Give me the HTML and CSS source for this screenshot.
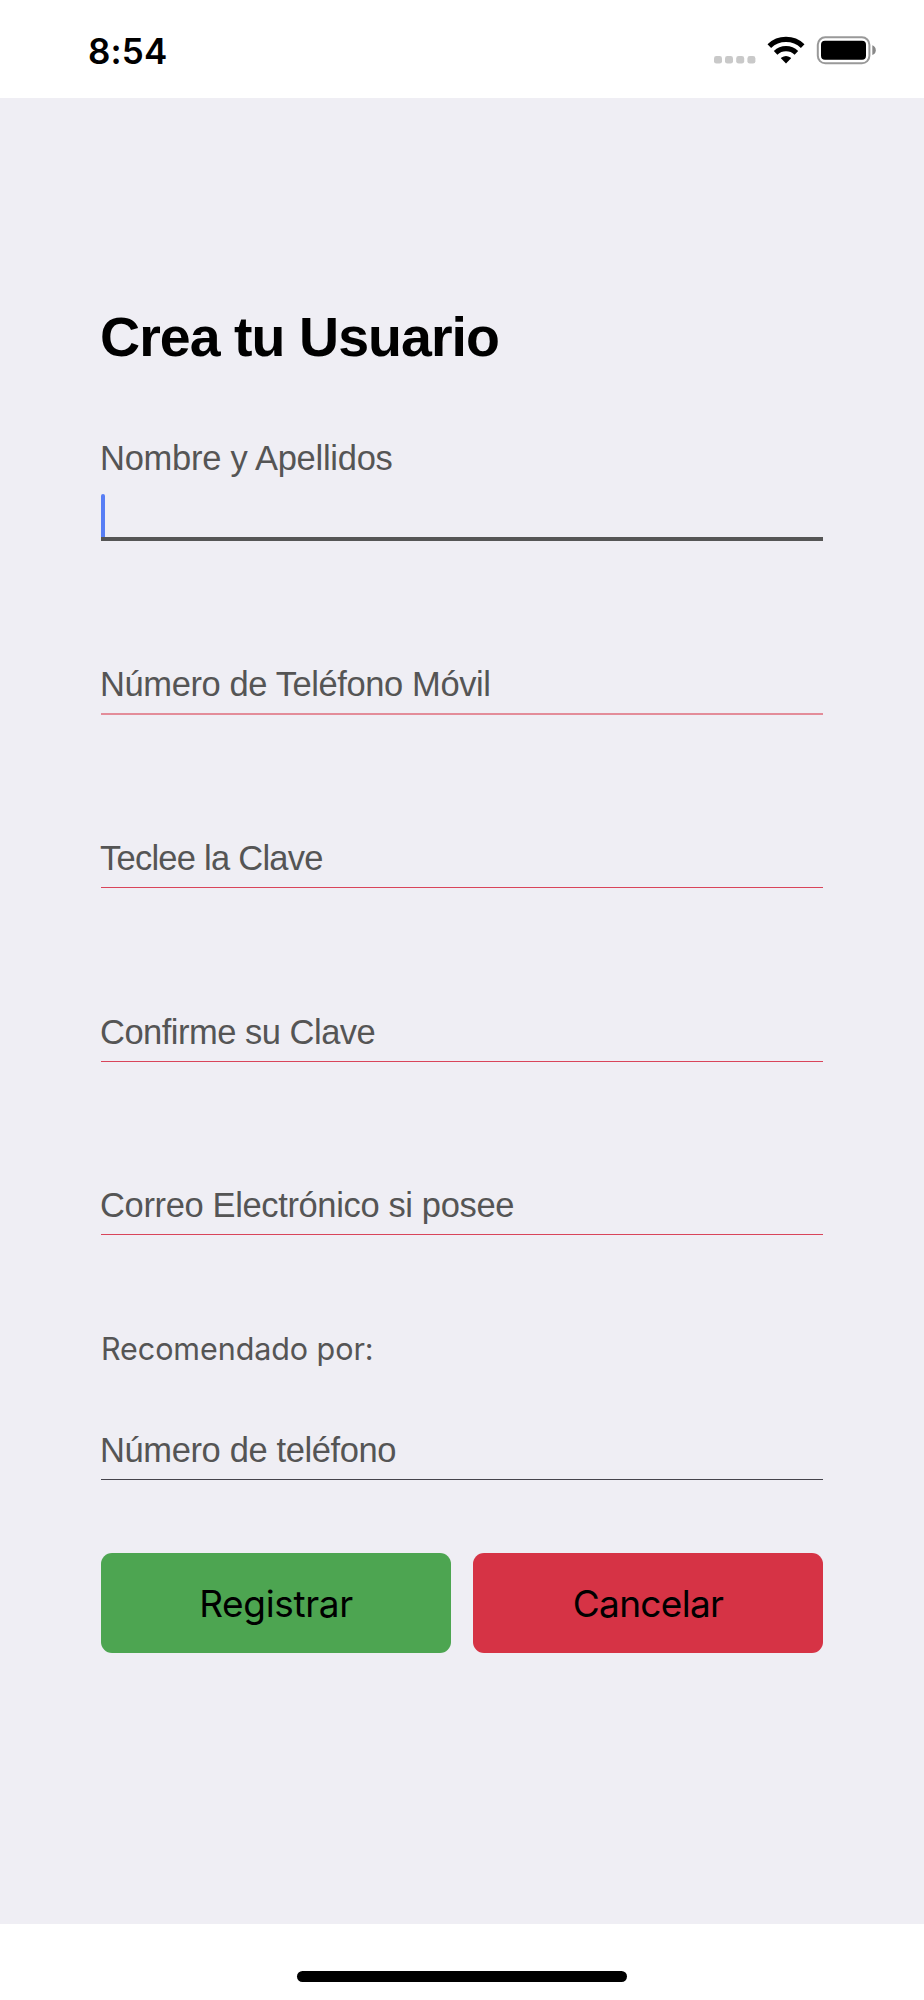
FILE: index.html
```html
<!DOCTYPE html>
<html lang="es">
<head>
<meta charset="utf-8">
<title>Crea tu Usuario</title>
<link rel="stylesheet" href="styles.css">
</head>
<body>
<header class="status">
  <span class="time">8:54</span>
  <svg class="indicators" width="164" height="32" viewBox="713 34 164 32" aria-hidden="true">
    <g fill="#c9c9c9">
      <rect x="714" y="56" width="8" height="7.6" rx="2.4"/>
      <rect x="725" y="56" width="8" height="7.6" rx="2.4"/>
      <rect x="736.2" y="56" width="8" height="7.6" rx="2.4"/>
      <rect x="747.4" y="56" width="8" height="7.6" rx="2.4"/>
    </g>
    <g fill="none" stroke="#000" stroke-width="5.2">
      <path d="M769.3 46.1A24.2 24.2 0 0 1 802.7 46.1"/>
      <path d="M775.6 52.8A15.2 15.2 0 0 1 796.4 52.8"/>
    </g>
    <path d="M786 63.4L780.9 58.3Q780.9 57.8 781.5 57.4Q786 54.4 790.5 57.4Q791.1 57.8 791.1 58.3Z"/>
    <rect x="817.8" y="37.3" width="51.6" height="26" rx="7.5" fill="none" stroke="#999" stroke-width="2"/>
    <rect x="821" y="40.8" width="45" height="19" rx="4"/>
    <path d="M872.3 45.3Q875.8 46.8 875.8 50.2Q875.8 53.6 872.3 55.1Z" fill="#888"/>
  </svg>
</header>
<main class="form">
  <h1 class="title">Crea tu Usuario</h1>
  <div class="focused">
    <div class="label name">Nombre y Apellidos</div>
    <div class="entry"><span class="caret"></span></div>
  </div>
  <div class="field first"><span class="label phone">Número de Teléfono Móvil</span></div>
  <div class="field odd"><span class="label key">Teclee la Clave</span></div>
  <div class="field"><span class="label confirm">Confirme su Clave</span></div>
  <div class="field odd"><span class="label mail">Correo Electrónico si posee</span></div>
  <div class="referrer">Recomendado por:</div>
  <div class="field plain"><span class="label tel">Número de teléfono</span></div>
  <div class="actions">
    <button class="button register"><span>Registrar</span></button>
    <button class="button cancel"><span>Cancelar</span></button>
  </div>
</main>
<footer class="home"><div class="home-bar"></div></footer>
</body>
</html>
```
FILE: styles.css
```css
* { box-sizing: border-box; }
body {
  margin: 0;
  height: 2000px;
  display: flex;
  flex-direction: column;
  background: #fff;
  font-family: "Liberation Sans", Arial, sans-serif;
}
.status {
  height: 98px;
  flex: none;
  display: flex;
  justify-content: space-between;
  align-items: flex-start;
  padding: 34px 47px 0 88px;
}
.time {
  font: 600 35px/34px Inter, sans-serif;
  letter-spacing: 0.1px;
}
.indicators { display: block; }
.form {
  height: 1826px;
  flex: none;
  padding: 207px 101px 0;
  background: #efeef4;
}
.title {
  margin: 0 0 69px -1px;
  font-size: 55.5px;
  line-height: 64px;
  font-weight: 700;
  letter-spacing: -0.95px;
  white-space: nowrap;
}
.label {
  display: block;
  height: 40px;
  margin-left: -1px;
  font-size: 34.5px;
  line-height: 40px;
  color: #555;
  white-space: nowrap;
}
.name { letter-spacing: -0.26px; }
.phone { letter-spacing: -0.4px; }
.key { letter-spacing: -0.75px; }
.confirm { letter-spacing: -0.5px; }
.mail { letter-spacing: -0.36px; }
.tel { letter-spacing: -0.38px; }
.entry {
  height: 47px;
  margin-top: 16px;
  border-bottom: 4px solid #555;
}
.caret {
  display: block;
  width: 4px;
  height: 43px;
  border-radius: 2px 2px 0 0;
  background: #587ef5;
}
.field {
  height: 174px;
  display: flex;
  flex-direction: column;
  justify-content: flex-end;
  padding-bottom: 9px;
  border-bottom: 1px solid #d9445a;
}
.field.odd { height: 173px; }
.field.first { border-bottom: 2px solid #e38c99; }
.referrer {
  height: 40px;
  margin-top: 94px;
  font: 400 30.5px/40px Inter, sans-serif;
  letter-spacing: -0.08px;
  color: #555;
  white-space: nowrap;
}
.field.plain {
  height: 111px;
  border-color: #45434b;
}
.actions {
  display: flex;
  gap: 22px;
  margin-top: 73px;
}
.button {
  flex: 1;
  height: 100px;
  padding: 1px 0 0;
  border: 0;
  border-radius: 11px;
  font: 400 37px/99px Inter, sans-serif;
  color: #000;
}
.register {
  background: #4da551;
  letter-spacing: -0.35px;
}
.cancel {
  background: #d63345;
  letter-spacing: -0.7px;
}
.home {
  flex: 1;
  padding-top: 47px;
}
.home-bar {
  width: 330px;
  height: 11px;
  margin: 0 auto;
  border-radius: 6px;
  background: #000;
}
```
